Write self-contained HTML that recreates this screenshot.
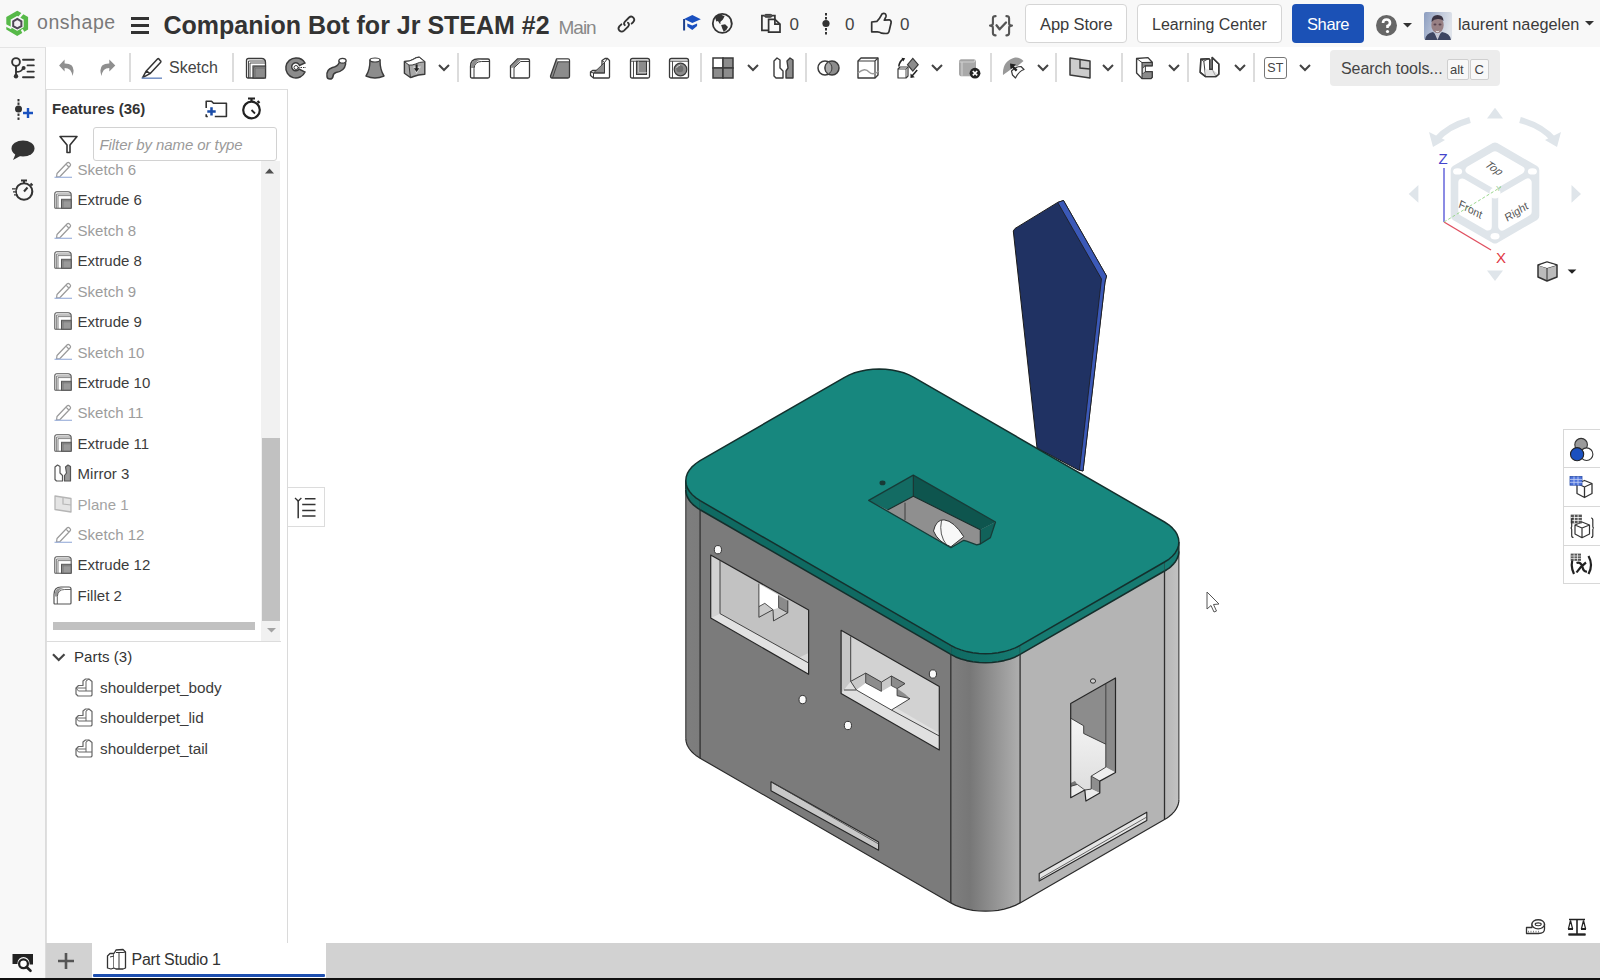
<!DOCTYPE html>
<html><head><meta charset="utf-8"><style>
html,body{margin:0;padding:0;width:1600px;height:980px;overflow:hidden;background:#fff;font-family:"Liberation Sans",sans-serif}
.t{position:absolute;white-space:nowrap}
svg{overflow:visible}
</style></head><body>
<svg style="position:absolute;left:0px;top:0px;" width="1600" height="980" viewBox="0 0 1600 980"><defs>
    <linearGradient id="gF" gradientUnits="userSpaceOnUse" x1="950" y1="0" x2="1021" y2="0">
      <stop offset="0" stop-color="#7f7f7f"/><stop offset="0.28" stop-color="#777777"/><stop offset="1" stop-color="#b0b0b0"/></linearGradient>
    <linearGradient id="gL" gradientUnits="userSpaceOnUse" x1="685" y1="0" x2="701" y2="0">
      <stop offset="0" stop-color="#7e7e7e"/><stop offset="1" stop-color="#7c7c7c"/></linearGradient>
    <linearGradient id="gR" gradientUnits="userSpaceOnUse" x1="1164" y1="0" x2="1179" y2="0">
      <stop offset="0" stop-color="#b6b6b6"/><stop offset="1" stop-color="#c2c2c2"/></linearGradient>
    <linearGradient id="gLF" gradientUnits="userSpaceOnUse" x1="950" y1="0" x2="1021" y2="0">
      <stop offset="0" stop-color="#0f6a62"/><stop offset="1" stop-color="#167a71"/></linearGradient>
    <linearGradient id="gW3" gradientUnits="userSpaceOnUse" x1="0" y1="720" x2="0" y2="790">
      <stop offset="0" stop-color="#f4f4f4"/><stop offset="1" stop-color="#dedede"/></linearGradient>
    </defs>
<polygon points="1013.3,231.0 1015.0,228.5 1057.7,202.4 1063.5,200.5 1106.5,276.0 1105.0,282.0 1083.0,471.0 1078.4,470.0 1037.0,448.0" fill="#203263" stroke="#1a1a1a" stroke-width="1.0" stroke-linejoin="round" />
<polygon points="1057.7,202.4 1063.5,200.5 1106.5,276.0 1105.0,282.0 1083.0,471.0 1079.5,470.0 1101.5,279.0" fill="#3b59b8" stroke="#1a1a1a" stroke-width="0.8" stroke-linejoin="round" />
<polygon points="685.8,489.7 685.9,491.5 686.2,493.4 686.7,495.2 687.4,497.0 688.4,498.8 689.5,500.5 690.8,502.2 692.3,503.8 694.0,505.4 695.9,506.9 697.9,508.3 700.1,509.7 700.1,758.2 697.9,756.8 695.9,755.4 694.0,753.9 692.3,752.3 690.8,750.7 689.5,749.0 688.4,747.3 687.4,745.5 686.7,743.7 686.2,741.9 685.9,740.0 685.8,738.2" fill="url(#gL)" stroke="none" stroke-width="0" stroke-linejoin="round" />
<polygon points="700.1,509.7 950.8,654.4 950.8,902.9 700.1,758.2" fill="#7b7b7b" stroke="none" stroke-width="0" stroke-linejoin="round" />
<polygon points="950.8,654.4 955.6,656.9 961.0,658.9 966.7,660.6 972.8,661.8 979.1,662.5 985.5,662.7 991.9,662.5 998.1,661.8 1004.2,660.6 1010.0,658.9 1015.3,656.9 1020.1,654.4 1020.1,902.9 1015.3,905.4 1010.0,907.4 1004.2,909.1 998.1,910.3 991.9,911.0 985.5,911.2 979.1,911.0 972.8,910.3 966.7,909.1 961.0,907.4 955.6,905.4 950.8,902.9" fill="url(#gF)" stroke="none" stroke-width="0" stroke-linejoin="round" />
<polygon points="1020.1,654.4 1164.5,571.0 1164.5,819.5 1020.1,902.9" fill="#b4b4b4" stroke="none" stroke-width="0" stroke-linejoin="round" />
<polygon points="1164.5,571.0 1166.7,569.7 1168.8,568.3 1170.6,566.8 1172.3,565.2 1173.8,563.6 1175.2,561.9 1176.3,560.1 1177.2,558.4 1178.0,556.6 1178.5,554.7 1178.8,552.9 1178.9,551.1 1178.9,799.6 1178.8,801.4 1178.5,803.2 1178.0,805.1 1177.2,806.9 1176.3,808.6 1175.2,810.4 1173.8,812.1 1172.3,813.7 1170.6,815.3 1168.8,816.8 1166.7,818.2 1164.5,819.5" fill="url(#gR)" stroke="none" stroke-width="0" stroke-linejoin="round" />
<polyline points="685.8,738.2 685.9,740.0 686.2,741.9 686.7,743.7 687.4,745.5 688.4,747.3 689.5,749.0 690.8,750.7 692.3,752.3 694.0,753.9 695.9,755.4 697.9,756.8 700.1,758.2 950.8,902.9 955.6,905.4 961.0,907.4 966.7,909.1 972.8,910.3 979.1,911.0 985.5,911.2 991.9,911.0 998.1,910.3 1004.2,909.1 1010.0,907.4 1015.3,905.4 1020.1,902.9 1164.5,819.5 1166.7,818.2 1168.8,816.8 1170.6,815.3 1172.3,813.7 1173.8,812.1 1175.2,810.4 1176.3,808.6 1177.2,806.9 1178.0,805.1 1178.5,803.2 1178.8,801.4 1178.9,799.6" fill="none" stroke="#2a2a2a" stroke-width="1.2" stroke-linejoin="round"/>
<polyline points="700.1,509.7 700.1,758.2" fill="none" stroke="#2e2e2e" stroke-width="1.3" stroke-linejoin="round"/>
<polyline points="950.8,654.4 950.8,902.9" fill="none" stroke="#2e2e2e" stroke-width="1.3" stroke-linejoin="round"/>
<polyline points="1020.1,654.4 1020.1,902.9" fill="none" stroke="#2e2e2e" stroke-width="1.3" stroke-linejoin="round"/>
<polyline points="1164.5,571.0 1164.5,819.5" fill="none" stroke="#2e2e2e" stroke-width="1.3" stroke-linejoin="round"/>

<polyline points="685.8,489.7 685.8,738.2" fill="none" stroke="#2a2a2a" stroke-width="1.0" stroke-linejoin="round"/>
<polyline points="1178.9,551.1 1178.9,799.6" fill="none" stroke="#2a2a2a" stroke-width="1.0" stroke-linejoin="round"/>
<polygon points="710.7,555.0 808.6,610.0 808.6,674.3 710.7,618.0" fill="#c2c2c2" stroke="none" stroke-width="0" stroke-linejoin="round" />
<polygon points="710.7,555.0 720.0,560.3 720.0,613.6 710.7,618.0" fill="#d2d2d2" stroke="none" stroke-width="0" stroke-linejoin="round" />
<polygon points="710.7,618.0 720.0,613.6 808.6,663.0 808.6,674.3" fill="#e2e2e2" stroke="none" stroke-width="0" stroke-linejoin="round" />
<polygon points="758.9,583.7 778.6,595.0 778.6,609.2 773.0,609.7 764.8,604.1 758.9,606.6" fill="#ffffff" stroke="none" stroke-width="0" stroke-linejoin="round" />
<polygon points="778.6,595.4 787.8,600.5 787.8,612.8 778.6,607.7" fill="#8a8a8a" stroke="none" stroke-width="0" stroke-linejoin="round" />
<polygon points="758.9,606.6 764.8,603.3 773.0,609.7 758.9,617.3" fill="#cacaca" stroke="none" stroke-width="0" stroke-linejoin="round" />
<polygon points="773.0,609.7 778.6,607.7 787.8,612.8 773.5,620.9" fill="#cacaca" stroke="none" stroke-width="0" stroke-linejoin="round" />
<polygon points="794.0,660.0 808.6,653.0 808.6,663.0 799.0,657.0" fill="#d8d8d8" stroke="none" stroke-width="0" stroke-linejoin="round" />
<polygon points="710.7,555.0 808.6,610.0 808.6,674.3 710.7,618.0" fill="none" stroke="#262626" stroke-width="1.2" stroke-linejoin="round" />
<polyline points="720.0,560.3 720.0,613.6 808.6,663.0" fill="none" stroke="#333" stroke-width="0.9" stroke-linejoin="round"/>
<polyline points="758.9,583.7 758.9,617.3 773.0,609.7 773.5,620.9 787.8,612.8 787.8,600.5" fill="none" stroke="#333" stroke-width="0.9" stroke-linejoin="round"/>
<polyline points="758.9,606.6 764.8,603.3 773.0,609.7" fill="none" stroke="#333" stroke-width="0.8" stroke-linejoin="round"/>
<polyline points="778.6,595.4 778.6,607.7 787.8,612.8" fill="none" stroke="#333" stroke-width="0.8" stroke-linejoin="round"/>
<polygon points="841.1,630.3 939.3,686.4 939.3,750.0 841.1,693.6" fill="#d2d2d2" stroke="none" stroke-width="0" stroke-linejoin="round" />
<polygon points="841.1,630.3 850.7,636.4 850.7,681.4 841.1,693.6" fill="#c6c6c6" stroke="none" stroke-width="0" stroke-linejoin="round" />
<polygon points="841.1,693.6 850.7,681.4 939.3,733.0 939.3,750.0" fill="#e0e0e0" stroke="none" stroke-width="0" stroke-linejoin="round" />
<polygon points="850.7,681.4 865.7,673.1 865.7,682.9 856.4,690.0" fill="#c9c9c9" stroke="none" stroke-width="0" stroke-linejoin="round" />
<polygon points="865.7,673.1 881.4,682.1 881.4,691.4 865.7,682.9" fill="#8c8c8c" stroke="none" stroke-width="0" stroke-linejoin="round" />
<polygon points="881.4,682.1 891.4,676.0 891.4,685.7 881.4,691.4" fill="#c9c9c9" stroke="none" stroke-width="0" stroke-linejoin="round" />
<polygon points="891.4,676.0 905.0,683.6 897.1,688.6 891.4,685.7" fill="#8c8c8c" stroke="none" stroke-width="0" stroke-linejoin="round" />
<polygon points="897.1,688.6 897.1,695.7 910.0,698.6 905.0,694.0" fill="#8c8c8c" stroke="none" stroke-width="0" stroke-linejoin="round" />
<polygon points="856.4,690.0 865.7,682.9 881.4,691.4 891.4,685.7 897.1,688.6 897.1,695.7 910.0,698.6 891.4,710.0 868.0,697.0" fill="#ffffff" stroke="none" stroke-width="0" stroke-linejoin="round" />
<polygon points="841.1,630.3 939.3,686.4 939.3,750.0 841.1,693.6" fill="none" stroke="#262626" stroke-width="1.2" stroke-linejoin="round" />
<polyline points="850.7,636.4 850.7,681.4" fill="none" stroke="#333" stroke-width="0.9" stroke-linejoin="round"/>
<polyline points="844.0,690.0 856.4,690.0 891.4,710.0 939.3,736.0" fill="none" stroke="#333" stroke-width="0.9" stroke-linejoin="round"/>
<polyline points="856.4,690.0 850.7,681.4 865.7,673.1 881.4,682.1 891.4,676.0 905.0,683.6 897.1,688.6 897.1,695.7 910.0,698.6 891.4,710.0" fill="none" stroke="#333" stroke-width="0.9" stroke-linejoin="round"/>
<polyline points="865.7,673.1 865.7,682.9 881.4,691.4 881.4,682.1" fill="none" stroke="#333" stroke-width="0.8" stroke-linejoin="round"/>
<polyline points="891.4,676.0 891.4,685.7 897.1,688.6" fill="none" stroke="#333" stroke-width="0.8" stroke-linejoin="round"/>
<ellipse cx="717.9" cy="549.7" rx="3.6" ry="4.14" fill="#fafafa" stroke="#333" stroke-width="1"/>
<ellipse cx="802.6" cy="699.6" rx="3.6" ry="4.14" fill="#fafafa" stroke="#333" stroke-width="1"/>
<ellipse cx="847.9" cy="725.5" rx="3.6" ry="4.14" fill="#fafafa" stroke="#333" stroke-width="1"/>
<ellipse cx="932.9" cy="674" rx="3.6" ry="4.14" fill="#fafafa" stroke="#333" stroke-width="1"/>
<polygon points="771.0,781.7 878.6,842.0 878.6,850.3 771.0,790.7" fill="#c8c8c8" stroke="#262626" stroke-width="1.1" stroke-linejoin="round" />
<polyline points="771.0,781.7 775.0,784.0 878.6,844.0" fill="none" stroke="#444" stroke-width="0.8" stroke-linejoin="round"/>
<polygon points="1070.7,703.6 1115.5,678.0 1115.5,772.5 1099.8,781.1 1099.8,793.0 1085.9,801.0 1084.8,790.0 1070.7,797.7" fill="url(#gW3)" stroke="none" stroke-width="0" stroke-linejoin="round" />
<polygon points="1070.7,703.6 1105.8,683.7 1105.8,744.2 1083.7,733.5 1083.7,725.8 1070.7,718.2" fill="#8c8c8c" stroke="none" stroke-width="0" stroke-linejoin="round" />
<polygon points="1115.5,678.0 1105.8,683.7 1105.8,767.2 1115.5,772.5" fill="#8a8a8a" stroke="none" stroke-width="0" stroke-linejoin="round" />
<polygon points="1105.8,767.2 1091.2,776.1 1099.8,781.1 1115.5,772.5" fill="#eeeeee" stroke="none" stroke-width="0" stroke-linejoin="round" />
<polygon points="1091.2,776.1 1099.8,781.1 1099.8,793.0 1091.2,789.1" fill="#8e8e8e" stroke="none" stroke-width="0" stroke-linejoin="round" />
<polygon points="1084.8,790.0 1091.2,789.1 1099.8,793.0 1085.9,801.0" fill="#ececec" stroke="none" stroke-width="0" stroke-linejoin="round" />
<polygon points="1070.7,786.4 1077.3,784.4 1083.9,788.4 1084.8,790.0 1070.7,797.7" fill="#ececec" stroke="none" stroke-width="0" stroke-linejoin="round" />
<polygon points="1070.7,783.0 1075.0,781.0 1077.3,784.4 1070.7,786.4" fill="#777" stroke="none" stroke-width="0" stroke-linejoin="round" />
<polygon points="1070.7,703.6 1115.5,678.0 1115.5,772.5 1099.8,781.1 1099.8,793.0 1085.9,801.0 1084.8,790.0 1070.7,797.7" fill="none" stroke="#262626" stroke-width="1.2" stroke-linejoin="round" />
<polyline points="1070.7,718.2 1083.7,725.8 1083.7,733.5 1105.8,744.2" fill="none" stroke="#333" stroke-width="0.9" stroke-linejoin="round"/>
<polyline points="1105.8,683.7 1105.8,767.2 1091.2,776.1 1091.2,789.1 1084.8,790.0" fill="none" stroke="#333" stroke-width="0.9" stroke-linejoin="round"/>
<polyline points="1091.2,776.1 1099.8,781.1" fill="none" stroke="#333" stroke-width="0.8" stroke-linejoin="round"/>
<polyline points="1070.7,786.4 1077.3,784.4 1084.8,790.0" fill="none" stroke="#333" stroke-width="0.8" stroke-linejoin="round"/>
<ellipse cx="1093" cy="681" rx="2.6" ry="2.2" fill="#d0d0d0" stroke="#333" stroke-width="1"/>
<polygon points="1039.2,873.4 1146.8,812.2 1146.8,820.5 1039.2,881.0" fill="#e6e6e6" stroke="#262626" stroke-width="1.1" stroke-linejoin="round" />
<polyline points="1039.2,881.0 1041.0,878.0 1146.8,817.0" fill="none" stroke="#444" stroke-width="0.8" stroke-linejoin="round"/>
<polygon points="685.8,480.7 685.9,482.5 686.2,484.4 686.7,486.2 687.4,488.0 688.4,489.8 689.5,491.5 690.8,493.2 692.3,494.8 694.0,496.4 695.9,497.9 697.9,499.3 700.1,500.7 700.1,509.7 697.9,508.3 695.9,506.9 694.0,505.4 692.3,503.8 690.8,502.2 689.5,500.5 688.4,498.8 687.4,497.0 686.7,495.2 686.2,493.4 685.9,491.5 685.8,489.7" fill="#137067" stroke="none" stroke-width="0" stroke-linejoin="round" />
<polygon points="700.1,500.7 950.8,645.4 950.8,654.4 700.1,509.7" fill="#0f6a62" stroke="none" stroke-width="0" stroke-linejoin="round" />
<polygon points="950.8,645.4 955.6,647.9 961.0,649.9 966.7,651.6 972.8,652.8 979.1,653.5 985.5,653.7 991.9,653.5 998.1,652.8 1004.2,651.6 1010.0,649.9 1015.3,647.9 1020.1,645.4 1020.1,654.4 1015.3,656.9 1010.0,658.9 1004.2,660.6 998.1,661.8 991.9,662.5 985.5,662.7 979.1,662.5 972.8,661.8 966.7,660.6 961.0,658.9 955.6,656.9 950.8,654.4" fill="url(#gLF)" stroke="none" stroke-width="0" stroke-linejoin="round" />
<polygon points="1020.1,645.4 1164.5,562.0 1164.5,571.0 1020.1,654.4" fill="#167a71" stroke="none" stroke-width="0" stroke-linejoin="round" />
<polygon points="1164.5,562.0 1166.7,560.7 1168.8,559.3 1170.6,557.8 1172.3,556.2 1173.8,554.6 1175.2,552.9 1176.3,551.1 1177.2,549.4 1178.0,547.6 1178.5,545.7 1178.8,543.9 1178.9,542.1 1178.9,551.1 1178.8,552.9 1178.5,554.7 1178.0,556.6 1177.2,558.4 1176.3,560.1 1175.2,561.9 1173.8,563.6 1172.3,565.2 1170.6,566.8 1168.8,568.3 1166.7,569.7 1164.5,571.0" fill="#177d74" stroke="none" stroke-width="0" stroke-linejoin="round" />
<polyline points="685.8,489.7 685.9,491.5 686.2,493.4 686.7,495.2 687.4,497.0 688.4,498.8 689.5,500.5 690.8,502.2 692.3,503.8 694.0,505.4 695.9,506.9 697.9,508.3 700.1,509.7 950.8,654.4 955.6,656.9 961.0,658.9 966.7,660.6 972.8,661.8 979.1,662.5 985.5,662.7 991.9,662.5 998.1,661.8 1004.2,660.6 1010.0,658.9 1015.3,656.9 1020.1,654.4 1164.5,571.0 1166.7,569.7 1168.8,568.3 1170.6,566.8 1172.3,565.2 1173.8,563.6 1175.2,561.9 1176.3,560.1 1177.2,558.4 1178.0,556.6 1178.5,554.7 1178.8,552.9 1178.9,551.1" fill="none" stroke="#142e2b" stroke-width="1.6" stroke-linejoin="round"/>
<polyline points="700.1,500.7 700.1,509.7" fill="none" stroke="#184a45" stroke-width="0.8" stroke-linejoin="round"/>
<polyline points="950.8,645.4 950.8,654.4" fill="none" stroke="#184a45" stroke-width="0.8" stroke-linejoin="round"/>
<polyline points="1020.1,645.4 1020.1,654.4" fill="none" stroke="#184a45" stroke-width="0.8" stroke-linejoin="round"/>
<polyline points="1164.5,562.0 1164.5,571.0" fill="none" stroke="#184a45" stroke-width="0.8" stroke-linejoin="round"/>
<polyline points="685.8,480.7 685.8,489.7" fill="none" stroke="#142e2b" stroke-width="1.4" stroke-linejoin="round"/>
<polyline points="1178.9,542.1 1178.9,551.1" fill="none" stroke="#142e2b" stroke-width="1.4" stroke-linejoin="round"/>
<polygon points="844.6,377.3 849.4,374.9 854.7,372.8 860.5,371.2 866.5,370.0 872.8,369.3 879.2,369.0 885.6,369.3 891.9,370.0 897.9,371.2 903.7,372.8 909.0,374.9 913.8,377.3 1164.5,522.0 1168.8,524.8 1172.3,527.9 1175.2,531.2 1177.2,534.7 1178.5,538.4 1178.9,542.1 1178.5,545.7 1177.2,549.4 1175.2,552.9 1172.3,556.2 1168.8,559.3 1164.5,562.0 1020.1,645.4 1015.3,647.9 1010.0,649.9 1004.2,651.6 998.1,652.8 991.9,653.5 985.5,653.7 979.1,653.5 972.8,652.8 966.7,651.6 961.0,649.9 955.6,647.9 950.8,645.4 700.1,500.7 695.9,497.9 692.3,494.8 689.5,491.5 687.4,488.0 686.2,484.4 685.8,480.7 686.2,477.0 687.4,473.4 689.5,469.9 692.3,466.6 695.9,463.5 700.1,460.7" fill="#17877e" stroke="#13302d" stroke-width="1.5" stroke-linejoin="round" />
<polygon points="868.7,500.4 913.3,475.1 995.5,522.0 990.4,537.6 980.3,544.0 976.7,544.9 966.6,541.2 963.8,540.3 950.9,547.7" fill="#8f8f8f" stroke="none" stroke-width="0" stroke-linejoin="round" />
<polygon points="868.7,500.4 913.3,475.1 913.3,496.2 887.6,510.0" fill="#136b63" stroke="none" stroke-width="0" stroke-linejoin="round" />
<polygon points="913.3,475.1 995.5,522.0 980.3,529.8 913.3,496.2" fill="#0e554e" stroke="none" stroke-width="0" stroke-linejoin="round" />
<polygon points="980.3,529.8 995.5,522.0 990.4,537.6 980.3,544.0" fill="#11625a" stroke="none" stroke-width="0" stroke-linejoin="round" />
<polyline points="905.0,502.7 905.0,520.1" fill="none" stroke="#333" stroke-width="0.9" stroke-linejoin="round"/>
<path d="M933.5 531 Q936 519.5 944 519.8 Q954 521 963.8 536.7 L950.9 546.8 Q938 542 933.5 531Z" fill="#f8f8f8" stroke="#333" stroke-width="1"/>
<path d="M941.5 520.3 Q938.5 535 947 545.5" fill="none" stroke="#444" stroke-width="0.9"/>
<polygon points="868.7,500.4 913.3,475.1 995.5,522.0 990.4,537.6 980.3,544.0 976.7,544.9 966.6,541.2 963.8,540.3 950.9,547.7" fill="none" stroke="#163c38" stroke-width="1.3" stroke-linejoin="round" />
<polyline points="887.6,510.0 913.3,496.2 980.3,529.8 980.3,544.0" fill="none" stroke="#1a2e2c" stroke-width="1.1" stroke-linejoin="round"/>
<polyline points="913.3,475.1 913.3,496.2" fill="none" stroke="#1a2e2c" stroke-width="1.0" stroke-linejoin="round"/>
<ellipse cx="882.5" cy="482.9" rx="3" ry="2.3" fill="#183a36"/></svg>
<svg style="position:absolute;left:0px;top:0px;" width="1600" height="980" viewBox="0 0 1600 980">
    <g fill="#dfe5ea">
      <path d="M1487 118.4 L1495 107.8 L1503 118.4Z"/>
      <path d="M1487 270.5 L1503 270.5 L1495 281Z"/>
      <path d="M1418.4 185 L1418.4 202.7 L1408.7 194Z"/>
      <path d="M1571.5 185 L1581 194 L1571.5 202.7Z"/>
    </g>
    <g fill="none" stroke="#dfe5ea" stroke-width="6">
      <path d="M1470 120 Q1448 126 1436 140"/>
      <path d="M1520 120 Q1542 126 1554 140"/>
    </g>
    <path d="M1429 132 L1433 147 L1445 140Z" fill="#dfe5ea"/>
    <path d="M1561 132 L1557 147 L1545 140Z" fill="#dfe5ea"/>
    <polygon points="1495.0,147.0 1534.8,170.0 1534.8,216.0 1495.0,239.0 1455.2,216.0 1455.2,170.0" fill="#dfe5ea" stroke="#dfe5ea" stroke-width="9" stroke-linejoin="round"/>
    <polygon points="1495.0,155.3 1520.5,170.0 1495.0,184.7 1469.5,170.0" fill="#fff" stroke="#fff" stroke-width="8" stroke-linejoin="round"/>
    <polygon points="1462.3,182.4 1487.8,197.1 1487.8,226.6 1462.3,211.9" fill="#fff" stroke="#fff" stroke-width="8" stroke-linejoin="round"/>
    <polygon points="1502.2,197.1 1527.7,182.4 1527.7,211.9 1502.2,226.6" fill="#fff" stroke="#fff" stroke-width="8" stroke-linejoin="round"/>
    <ellipse cx="1457.6" cy="171.4" rx="4.5" ry="3.2" fill="#fff"/>
    <ellipse cx="1532.4" cy="171.4" rx="4.5" ry="3.2" fill="#fff"/>
    <ellipse cx="1495.0" cy="236.2" rx="4.5" ry="3.2" fill="#fff"/>
    <circle cx="1495" cy="193" r="5.5" fill="#fff"/>
    <text x="0" y="0" font-family="Liberation Sans" font-size="11" font-style="italic" fill="#555" transform="translate(1484,166) rotate(33) skewX(-12)">Top</text>
    <text x="0" y="0" font-family="Liberation Sans" font-size="11" fill="#555" transform="translate(1458,207) rotate(28) skewX(10)">Front</text>
    <text x="0" y="0" font-family="Liberation Sans" font-size="11" fill="#555" transform="translate(1507,222) rotate(-32) skewX(-8)">Right</text>
    <text x="1496" y="191" font-family="Liberation Sans" font-size="8" fill="#9c9">Y</text>
    <path d="M1444 222 L1444 168" stroke="#5a5ad8" stroke-width="1.4"/>
    <path d="M1444 222 L1491 250" stroke="#e05060" stroke-width="1.4"/>
    <path d="M1444 222 L1501 187" stroke="#9bd88e" stroke-width="1" stroke-dasharray="3 2"/>
    <text x="1438.5" y="163.5" font-family="Liberation Sans" font-size="15" fill="#4444cc">Z</text>
    <text x="1496" y="262.5" font-family="Liberation Sans" font-size="15" fill="#e03844">X</text>
    <g transform="translate(1537,261)">
      <path d="M1 4 L10 1 L20 4 L20 16 L10 20 L1 16Z" fill="#bbb" stroke="#333" stroke-width="1.5" stroke-linejoin="round"/>
      <path d="M1 4 L10 7 L20 4 M10 7 L10 20" fill="none" stroke="#333" stroke-width="1"/>
      <path d="M1.8 4.5 L10 7 L19 4.2 L10 1.6Z" fill="#fff"/>
    </g>
    <path d="M1567.6 269.6 L1576.4 269.6 L1572 273.8Z" fill="#222"/>
    </svg>
<div style="position:absolute;left:1563px;top:429px;width:37px;height:155px;background:#fff;border:1px solid #d8d8d8;border-right:none;box-sizing:border-box"></div>
<div style="position:absolute;left:1564px;top:467px;width:36px;height:1px;background:#d8d8d8"></div>
<div style="position:absolute;left:1564px;top:506px;width:36px;height:1px;background:#d8d8d8"></div>
<div style="position:absolute;left:1564px;top:545px;width:36px;height:1px;background:#d8d8d8"></div>
<svg style="position:absolute;left:1568px;top:436px;" width="28" height="28" viewBox="0 0 28 28"><circle cx="13.1" cy="8.7" r="6.3" fill="#9a9a9a" stroke="#333" stroke-width="1.1"/><circle cx="18.6" cy="18.2" r="6.3" fill="#fff" stroke="#333" stroke-width="1.1"/><circle cx="9.1" cy="18.2" r="6.6" fill="#1a50c0" stroke="#222" stroke-width="1.1"/></svg>
<svg style="position:absolute;left:1568px;top:474px;" width="28" height="28" viewBox="0 0 28 28"><path d="M9 9.5 L16.5 6.5 L24 9.5 L24 19.5 L16.5 23.5 L9 19.5Z M9 9.5 L16.5 13 L24 9.5 M16.5 13 L16.5 23.5" fill="#fff" stroke="#333" stroke-width="1.3" stroke-linejoin="round"/><rect x="2" y="2.5" width="12" height="8.7" fill="#4d72dc" stroke="#2c4fa8" stroke-width="0.8"/><path d="M2 5.4 L14 5.4 M2 8.3 L14 8.3 M6 2.5 L6 11.2 M10 2.5 L10 11.2" stroke="#c9d6f5" stroke-width="0.8"/></svg>
<svg style="position:absolute;left:1568px;top:513px;" width="28" height="28" viewBox="0 0 28 28"><path d="M7 12 L14 9 L21.5 12 L21.5 21 L14 24.7 L7 21Z M7 12 L14 15 L21.5 12 M14 15 L14 24.7" fill="#fff" stroke="#333" stroke-width="1.2" stroke-linejoin="round"/><rect x="2.7" y="1.6" width="11.2" height="8.8" fill="#555"/><path d="M2.7 4.5 L13.9 4.5 M2.7 7.4 L13.9 7.4 M6.4 1.6 L6.4 10.4 M10.1 1.6 L10.1 10.4" stroke="#fff" stroke-width="0.8"/><path d="M5.5 5 Q3.7 5 3.7 7 L3.7 13.5 Q3.7 15 2.5 15 Q3.7 15 3.7 16.5 L3.7 22.5 Q3.7 24.5 5.5 24.5 M23 5 Q24.8 5 24.8 7 L24.8 13.5 Q24.8 15 26 15 Q24.8 15 24.8 16.5 L24.8 22.5 Q24.8 24.5 23 24.5" fill="none" stroke="#333" stroke-width="1.2"/></svg>
<svg style="position:absolute;left:1568px;top:552px;" width="28" height="28" viewBox="0 0 28 28"><path d="M6 4 Q1.5 12.5 6 22" fill="none" stroke="#222" stroke-width="2.2"/><path d="M20.5 4 Q25.5 13 20.5 22" fill="none" stroke="#222" stroke-width="2.2"/><path d="M8.5 11 Q13 9.5 14.5 15 Q15.5 20 19 19.5 M18 10.5 Q12.5 14.5 8.5 20.5" fill="none" stroke="#222" stroke-width="2.2"/><rect x="2.7" y="1.6" width="10.3" height="7.2" fill="#555"/><path d="M2.7 4 L13 4 M2.7 6.4 L13 6.4 M6.1 1.6 L6.1 8.8 M9.5 1.6 L9.5 8.8" stroke="#fff" stroke-width="0.7"/></svg>
<div style="position:absolute;left:287px;top:487px;width:38px;height:40px;background:#fff;border:1px solid #dcdcdc;border-left:none;box-sizing:border-box"></div>
<svg style="position:absolute;left:294px;top:495px;" width="24" height="24" viewBox="0 0 24 24"><path d="M1 3 L4.2 6 L7.4 3" fill="none" stroke="#333" stroke-width="1.3"/><path d="M4.2 5.5 L4.2 23.2" stroke="#333" stroke-width="1.5"/><path d="M10.9 3.8 L21.5 3.8 M8.2 9.5 L21.5 9.5 M8.2 15.4 L21.5 15.4 M8.2 21.1 L21.5 21.1" stroke="#333" stroke-width="1.5"/></svg>
<svg style="position:absolute;left:1525px;top:918px;" width="22" height="17" viewBox="0 0 22 17"><path d="M1.5 9.5 L7 9.5 L7 6 L19.5 6 L19.5 11 Q19.5 15.5 13.5 15.5 L1.5 15.5Z" fill="#fff" stroke="#333" stroke-width="1.3" stroke-linejoin="round"/><ellipse cx="13.2" cy="6.3" rx="6.3" ry="4.6" fill="#fff" stroke="#333" stroke-width="1.4"/><ellipse cx="13.2" cy="6.3" rx="3" ry="1.4" fill="none" stroke="#333" stroke-width="1.1"/><path d="M3.5 12.8 L3.5 14.5 M6 12.8 L6 14.5 M8.5 12.8 L8.5 14.5 M11 12.8 L11 14.5 M13.5 12.8 L13.5 14.5" stroke="#666" stroke-width="0.8"/></svg>
<svg style="position:absolute;left:1567px;top:918px;" width="20" height="18" viewBox="0 0 20 18"><path d="M2 1.5 L18 1.5 M10 1.5 L10 16 M1.5 16.5 L18.5 16.5" stroke="#222" stroke-width="1.6"/><path d="M1.5 16.5 L18.5 16.5" stroke="#222" stroke-width="2.2"/><path d="M3.5 2.5 L1.5 10.5 L5.5 10.5Z M16.5 2.5 L14.5 10.5 L18.5 10.5Z" fill="#fff" stroke="#222" stroke-width="1.2"/><path d="M1 11 L6 11 M14 11 L19 11" stroke="#222" stroke-width="1.8"/></svg>
<svg style="position:absolute;left:1205px;top:590px;" width="18" height="26" viewBox="0 0 18 26"><path d="M2 2 L2 19 L6 15.5 L9 22 L11.5 21 L8.5 14.5 L14 14Z" fill="#fff" stroke="#555" stroke-width="1"/></svg>
<div style="position:absolute;left:0px;top:0px;width:1600px;height:47px;background:#f8f8f8"></div>
<svg style="position:absolute;left:5.5px;top:11px;" width="23" height="25" viewBox="0 0 23 25">
    <path d="M11.2 2.25 L19.9 7.27 L19.9 17.33 L11.2 22.35 L2.5 17.33 L2.5 7.27 Z" fill="none" stroke="#56b948" stroke-width="4.4" stroke-linejoin="miter"/>
    <path d="M12.6 7 L17.8 1" stroke="#f8f8f8" stroke-width="2.2"/>
    <path d="M-0.5 14.2 L5.5 17.2" stroke="#f8f8f8" stroke-width="2.2"/>
    <path d="M15.8 18.4 L18.8 24.6" stroke="#f8f8f8" stroke-width="2.2"/>
    <path d="M11.3 7.97 L15.4 10.33 L15.4 15.07 L11.3 17.43 L7.2 15.07 L7.2 10.33 Z" fill="#f4eef4" stroke="#4f4656" stroke-width="2"/>
    </svg>
<div class="t" style="left:37.0px;top:12.69px;font-size:19.5px;line-height:19.5px;font-weight:400;color:#7a7a7a;letter-spacing:0.55px;">onshape</div>
<div style="position:absolute;left:131px;top:17px;width:18px;height:3px;background:#333"></div>
<div style="position:absolute;left:131px;top:24px;width:18px;height:3px;background:#333"></div>
<div style="position:absolute;left:131px;top:31px;width:18px;height:3px;background:#333"></div>
<div class="t" style="left:163.5px;top:12.59px;font-size:25px;line-height:25px;font-weight:700;color:#333;">Companion Bot for Jr STEAM #2</div>
<div class="t" style="left:558.5px;top:17.67px;font-size:19px;line-height:19px;font-weight:400;color:#888;letter-spacing:-1px;">Main</div>
<svg style="position:absolute;left:618px;top:16px;" width="17" height="17" viewBox="0 0 17 17"><g fill="none" stroke="#333" stroke-width="1.8" stroke-linecap="round">
      <path d="M6.8 9.2 Q5.2 7.5 7 5.5 L11 1.5 Q13.5 -0.5 15.5 1.8 Q17.2 4 15.3 6 L13.6 7.6"/>
      <path d="M3.4 8.3 L1.3 10.4 Q-0.5 12.8 1.6 14.8 Q3.8 16.6 6 14.6 L10.3 10.3 Q11.8 8.2 9.9 6.6"/>
    </g></svg>
<svg style="position:absolute;left:683px;top:15px;" width="18" height="17" viewBox="0 0 18 17"><g fill="#1a50c0">
      <path d="M1.1 4 L9.3 0 L17.8 4.3 L9.3 7.9 Z"/>
      <path d="M4.3 8.5 L9.3 10.6 L14.1 8.5 L14.1 10.9 L9.3 14.9 L4.3 11.4 Z"/>
    </g>
    <path d="M1.1 4 L1.1 15.5" stroke="#1c3f8a" stroke-width="2"/></svg>
<svg style="position:absolute;left:711px;top:13px;" width="22" height="22" viewBox="0 0 22 22"><circle cx="11.3" cy="10.4" r="9.5" fill="none" stroke="#333" stroke-width="1.8"/>
    <path d="M4.7 2.7 L9 1.3 L13.6 3.3 L11.9 6.4 L9.3 9 L9.6 11 L8.5 10.5 L7 7.9 L5.3 8.4 L4.4 5.6Z" fill="#333"/>
    <path d="M10.1 12.1 L14.1 11.3 L17 14.1 L15.3 17 L12.7 18.7 L11.3 15.6Z" fill="#333"/>
    <path d="M19.3 7 L21 7.9 L21.2 11.9 L19.9 10.7Z" fill="#333"/></svg>
<svg style="position:absolute;left:761px;top:14px;" width="21" height="19" viewBox="0 0 21 19"><g fill="none" stroke="#333" stroke-width="1.7" stroke-linejoin="miter">
      <path d="M3.2 1.7 L0.9 1.7 L0.9 16.4 L7.6 16.4"/>
      <path d="M11 1.7 L13.9 1.7 L13.9 5.4"/>
      <path d="M7.6 5.4 L13.9 5.4 L19 10.2 L19 18.2 L7.6 18.2 Z"/>
      <path d="M13.9 5.4 L13.9 10.2 L19 10.2"/>
    </g>
    <rect x="3.6" y="0.4" width="7.2" height="2.8" rx="1" fill="#555" stroke="#333" stroke-width="1"/></svg>
<div class="t" style="left:789.5px;top:15.81px;font-size:17px;line-height:17px;font-weight:400;color:#444;">0</div>
<svg style="position:absolute;left:822px;top:13px;" width="8" height="22" viewBox="0 0 8 22"><g fill="#333"><rect x="3" y="0" width="2" height="2.5"/><rect x="3" y="4" width="2" height="2.5"/>
      <circle cx="4" cy="10.5" r="3.6"/><rect x="3" y="15" width="2" height="2.5"/><rect x="3" y="19" width="2" height="2.5"/></g></svg>
<div class="t" style="left:845.0px;top:15.81px;font-size:17px;line-height:17px;font-weight:400;color:#444;">0</div>
<svg style="position:absolute;left:870px;top:13px;" width="22" height="21" viewBox="0 0 22 21"><path d="M1.7 9 L6.9 8.4 Q9.5 6 11.1 2.7 L12 0.9 Q13.8 -0.2 15.4 0.9 Q16.4 2.5 16 3.6 L14.3 7.2 L19.2 6.8 Q21.5 7.5 21.1 9.8 L19 18.6 Q18.5 20.5 16 20.5 Q13 20.5 11.7 20.2 Q9.5 18.8 7.4 18.8 L1.7 18.8 Z"
       fill="none" stroke="#333" stroke-width="1.7" stroke-linejoin="round"/></svg>
<div class="t" style="left:900.0px;top:15.81px;font-size:17px;line-height:17px;font-weight:400;color:#444;">0</div>
<svg style="position:absolute;left:984px;top:10px;" width="34" height="30" viewBox="0 0 34 30"><g fill="none" stroke="#555" stroke-width="2.1" stroke-linecap="round" stroke-linejoin="round"><path d="M11.6 6.1 Q8.9 6 8.9 8.5 L8.9 13.5 Q8.9 15.6 6 15.6 Q8.9 15.6 8.9 17.8 L8.9 23 Q8.9 25.4 11.6 25.4"/><path d="M22.4 6.1 Q25.1 6 25.1 8.5 L25.1 13.5 Q25.1 15.6 28 15.6 Q25.1 15.6 25.1 17.8 L25.1 23 Q25.1 25.4 22.4 25.4"/><path d="M12.5 15.3 L15.6 19.3 L22 12.5" stroke-width="2.3"/></g></svg>
<div style="position:absolute;left:1025px;top:4px;width:100px;height:38px;background:#fff;border:1px solid #d5d5d5;border-radius:4px;box-sizing:border-box;width:102px;height:39px"></div>
<div class="t" style="left:1040.0px;top:16.23px;font-size:16.5px;line-height:16.5px;font-weight:400;color:#3a3a3a;letter-spacing:-0.1px;">App Store</div>
<div style="position:absolute;left:1137px;top:4px;width:145px;height:39px;background:#fff;border:1px solid #d5d5d5;border-radius:4px;box-sizing:border-box"></div>
<div class="t" style="left:1152.0px;top:16.66px;font-size:16px;line-height:16px;font-weight:400;color:#3a3a3a;">Learning Center</div>
<div style="position:absolute;left:1292px;top:4px;width:72px;height:39px;background:#1b51b6;border-radius:4px"></div>
<div class="t" style="left:1307.0px;top:16.23px;font-size:16.5px;line-height:16.5px;font-weight:400;color:#fff;letter-spacing:-0.4px;">Share</div>
<svg style="position:absolute;left:1376px;top:15px;" width="21" height="21" viewBox="0 0 21 21"><circle cx="10.5" cy="10.5" r="10.5" fill="#666"/><path d="M7 8 Q7 4.5 10.5 4.5 Q14 4.5 14 7.8 Q14 10 11.5 11 L11.5 13" fill="none" stroke="#fff" stroke-width="2.6"/><circle cx="11.5" cy="16.5" r="1.6" fill="#fff"/></svg>
<svg style="position:absolute;left:1403px;top:23px;" width="10" height="5" viewBox="0 0 10 5"><path d="M0 0 L9 0 L4.5 4.5Z" fill="#333"/></svg>
<svg style="position:absolute;left:1424px;top:12px;" width="28" height="28" viewBox="0 0 28 28"><defs><linearGradient id="avbg" x1="0" y1="0" x2="1" y2="0.3"><stop offset="0" stop-color="#8b9dc0"/><stop offset="0.6" stop-color="#c2cadb"/><stop offset="1" stop-color="#dfe3ea"/></linearGradient></defs>
    <rect width="28" height="28" rx="2" fill="url(#avbg)"/>
    <ellipse cx="13.5" cy="13" rx="6.2" ry="8.3" fill="#988084"/>
    <path d="M7.5 10 Q7.5 3 13.5 3 Q19.5 3 19.5 9 Q17 6.5 13.5 7 Q10 7 7.5 10Z" fill="#3a3342"/>
    <ellipse cx="11" cy="12.5" rx="1.5" ry="0.9" fill="#5a4450"/><ellipse cx="16" cy="12.5" rx="1.5" ry="0.9" fill="#5a4450"/>
    <path d="M11.5 18.5 Q13.5 20 15.5 18.5 L14.8 19.8 Q13.5 20.6 12.2 19.8Z" fill="#eee"/>
    <path d="M1 28 Q2 21 9 20 L13.5 24 L18 20 Q26 21 27 28Z" fill="#3e4662"/>
    <path d="M10.5 21 L13.5 28 L16.5 21 L13.5 23.5Z" fill="#c8c8d4"/></svg>
<div class="t" style="left:1458.0px;top:16.40px;font-size:16.3px;line-height:16.3px;font-weight:400;color:#3a3a3a;">laurent naegelen</div>
<svg style="position:absolute;left:1585px;top:21px;" width="10" height="5" viewBox="0 0 10 5"><path d="M0 0 L9 0 L4.5 4.5Z" fill="#333"/></svg>
<div style="position:absolute;left:0px;top:47px;width:46px;height:931px;background:#f8f8f8;border-right:1px solid #dcdcdc;box-sizing:border-box;border-top:1px solid #e4e4e4"></div>
<div style="position:absolute;left:46px;top:46.5px;width:1554px;height:42.5px;background:#fff"></div>
<svg style="position:absolute;left:59px;top:59px;" width="17" height="18" viewBox="0 0 17 18"><path d="M0.1 6.5 L5.6 0.5 L5.6 4.4 Q14.6 4.2 14.6 11.5 Q14.6 14.5 13.3 17.1 Q12.8 9.2 5.6 9 L5.6 12.4 Z" fill="#8f8f8f"/></svg>
<svg style="position:absolute;left:99px;top:59px;" width="17" height="18" viewBox="0 0 17 18"><path d="M16.3 6.5 L10.3 0.5 L10.3 4.4 Q1.4 4.2 1.4 11.5 Q1.4 14.5 2.7 17.1 Q3.2 9.2 10.3 9 L10.3 12.4 Z" fill="#8f8f8f"/></svg>
<div style="position:absolute;left:129px;top:53px;width:2px;height:29px;background:#dcdcdc"></div>
<svg style="position:absolute;left:142px;top:58px;" width="21" height="22" viewBox="0 0 21 22"><path d="M0.6 19.6 L4.3 12.9 L15.7 0.8 Q16.3 0.3 16.9 0.9 L18.6 2.9 Q19.2 3.5 18.7 4.2 L8 15.7 Z M4.3 12.9 L8 15.7" fill="none" stroke="#333" stroke-width="1.5" stroke-linejoin="round"/><path d="M-0.4 20.2 L20 20.2" stroke="#7390c4" stroke-width="1.5"/></svg>
<div class="t" style="left:169.0px;top:60.46px;font-size:16px;line-height:16px;font-weight:400;color:#444;">Sketch</div>
<div style="position:absolute;left:232px;top:53px;width:2px;height:29px;background:#dcdcdc"></div>
<svg style="position:absolute;left:245px;top:57px;" width="22" height="22" viewBox="0 0 22 22"><path d="M1.5 19.5 L1.5 3.5 Q1.5 1.5 3.5 1.5 L16.5 1.5 Q20.5 1.5 20.5 5.5 L20.5 19.5 Q20.5 21 19 21 L3 21 Q1.5 21 1.5 19.5Z" fill="#fff" stroke="#3a3a3a" stroke-width="1.3"/><path d="M3.5 21 L3.5 4 L20.5 4 M5 21 L5 6 L20.5 6" fill="none" stroke="#3a3a3a" stroke-width="0.9"/><rect x="8" y="9" width="12.5" height="12" fill="#8c8c8c" stroke="#3a3a3a" stroke-width="1.2"/><path d="M8 9 L10 11 L20.5 11 M10 11 L10 21" fill="none" stroke="#666" stroke-width="0.8"/></svg>
<svg style="position:absolute;left:285px;top:57px;" width="22" height="22" viewBox="0 0 22 22"><path d="M11 1 A10 10 0 1 0 20 15 L14 12 A4 4 0 1 1 14.5 8.5 L20 6 A10 10 0 0 0 11 1Z" fill="#8c8c8c" stroke="#3a3a3a" stroke-width="1.5"/><circle cx="11" cy="10.5" r="2" fill="#ffffff" stroke="#3a3a3a" stroke-width="1"/><path d="M13 10.5 L21 10.5" stroke="#3a3a3a" stroke-width="1" stroke-dasharray="1.5 1"/></svg>
<svg style="position:absolute;left:325px;top:57px;" width="22" height="22" viewBox="0 0 22 22"><path d="M2 19.5 Q1 12.5 7.5 10.5 Q12.5 9.5 14 6 L14.5 3.5 L20.5 4 L20.5 7.5 Q19.5 14 11 15.5 Q8 16.5 8 19.5 Q7.5 22 5 22 Q2.2 22 2 19.5Z" fill="#8c8c8c" stroke="#3a3a3a" stroke-width="1.5" stroke-linejoin="round"/><ellipse cx="17.5" cy="3.8" rx="3.6" ry="2.4" fill="#fff" stroke="#3a3a3a" stroke-width="1.3"/></svg>
<svg style="position:absolute;left:365px;top:57px;" width="22" height="22" viewBox="0 0 22 22"><path d="M5 3 L15 3 Q15 13 19 19 Q10 23 1 19 Q5 13 5 3Z" fill="#8c8c8c" stroke="#3a3a3a" stroke-width="1.4" stroke-linejoin="round"/><ellipse cx="10" cy="3" rx="5" ry="2" fill="#ffffff" stroke="#3a3a3a" stroke-width="1.2"/></svg>
<svg style="position:absolute;left:404px;top:57px;" width="22" height="22" viewBox="0 0 22 22"><path d="M0.4 4.5 Q6 4.5 9 2.5 Q12.5 0.2 15.2 0.2 L20.8 4.8 L20.8 17.2 Q14 17.5 9.5 19.5 Q7.5 20.5 6.4 20.5 L0.4 16.2 Z" fill="#a8a8a8" stroke="#3a3a3a" stroke-width="1.4" stroke-linejoin="round"/><path d="M0.4 4.5 Q6 4.5 9 2.5 Q12.5 0.2 15.2 0.2 L20.8 4.8 Q15 5 11.5 7 Q8 8.5 5 8.1 Z" fill="#fff" stroke="#3a3a3a" stroke-width="1"/><path d="M5 8.1 L6.4 20.5" stroke="#3a3a3a" stroke-width="1"/><path d="M9 9.5 L12.5 17 L17 9.5" fill="#d8d8d8"/><path d="M12.6 7.4 L12.6 12.5" stroke="#222" stroke-width="2"/><path d="M9.8 11.2 L15.4 11.2 L12.6 15Z" fill="#222"/></svg>
<svg style="position:absolute;left:438px;top:64px;" width="12" height="8" viewBox="0 0 12 8"><path d="M1 1 L6 6 L11 1" fill="none" stroke="#444" stroke-width="2"/></svg>
<div style="position:absolute;left:457px;top:53px;width:2px;height:29px;background:#dcdcdc"></div>
<svg style="position:absolute;left:469px;top:57px;" width="22" height="22" viewBox="0 0 22 22"><path d="M1.5 19.5 L1.5 9.5 Q1.5 2 9 2 L19 2 Q20.5 2 20.5 3.5 L20.5 19.5 Q20.5 21 19 21 L3 21 Q1.5 21 1.5 19.5Z" fill="#fff" stroke="#3a3a3a" stroke-width="1.3"/><path d="M2 10 Q2 2.5 9 2.5 L13 2.5 Q5.5 3.5 5 11 L2 11Z" fill="#8c8c8c"/><path d="M5 11.5 Q5.5 4.5 12.5 4.5 L20.5 4.5 M5 11.5 L5 21" fill="none" stroke="#3a3a3a" stroke-width="1"/></svg>
<svg style="position:absolute;left:509px;top:57px;" width="22" height="22" viewBox="0 0 22 22"><path d="M1.5 19.5 L1.5 9 L8.5 2 L19 2 Q20.5 2 20.5 3.5 L20.5 19.5 Q20.5 21 19 21 L3 21 Q1.5 21 1.5 19.5Z" fill="#fff" stroke="#3a3a3a" stroke-width="1.3"/><path d="M2 9.2 L8.7 2.5 L12 2.5 L5 10.8 L2 10.8Z" fill="#8c8c8c"/><path d="M5 10.8 L11.7 4.5 L20.5 4.5 M5 10.8 L5 21" fill="none" stroke="#3a3a3a" stroke-width="1"/></svg>
<svg style="position:absolute;left:549px;top:57px;" width="22" height="22" viewBox="0 0 22 22"><path d="M1.5 19 L7.5 2 L19 2 Q20.5 2 20.5 3.5 L20.5 19.5 Q20.5 21 19 21 L3 21 Q1.5 21 1.5 19Z" fill="#8c8c8c" stroke="#3a3a3a" stroke-width="1.3" stroke-linejoin="round"/><path d="M8 2.6 L19 2.6 Q20 2.6 20 3.6 L20 4.8 L9 4.8Z" fill="#fff"/><path d="M9 4.8 L20.5 4.8 M9 4.8 L3.5 21" fill="none" stroke="#3a3a3a" stroke-width="0.9"/></svg>
<svg style="position:absolute;left:589px;top:57px;" width="22" height="22" viewBox="0 0 22 22"><path d="M1.5 15 L3.5 13.5 L13 13.5 L13 3.5 L16 1.5 L18.5 1.5 L20.5 3.5 L20.5 20 Q20.5 21 19.5 21 L4.5 21 L1.5 18.5Z" fill="#fff" stroke="#3a3a3a" stroke-width="1.3" stroke-linejoin="round"/><path d="M4.5 16 L15.5 5.5 L15.5 16Z" fill="#8c8c8c" stroke="#3a3a3a" stroke-width="0.9"/><path d="M1.5 15 L4.5 16 L16 16 M4.5 16 L4.5 21 M13 3.5 L15.5 5.5 L18.5 1.5 M15.5 5.5 L15.5 16" fill="none" stroke="#3a3a3a" stroke-width="1"/></svg>
<svg style="position:absolute;left:629px;top:57px;" width="22" height="22" viewBox="0 0 22 22"><path d="M1.5 3.5 Q1.5 1.5 3.5 1.5 L18.5 1.5 Q20.5 1.5 20.5 3.5 L20.5 19.5 Q20.5 21 19 21 L3 21 Q1.5 21 1.5 19.5Z" fill="#fff" stroke="#3a3a3a" stroke-width="1.3"/><path d="M1.5 4.2 L20.5 4.2 M4.5 4.2 L4.5 21" fill="none" stroke="#3a3a3a" stroke-width="0.9"/><path d="M7.5 4.2 L7.5 17.5 L17.5 17.5 L17.5 4.2Z" fill="#8c8c8c" stroke="#3a3a3a" stroke-width="1.1"/><path d="M9.5 4.5 L9.5 15.5 L17.5 15.5" fill="none" stroke="#bbb" stroke-width="1"/></svg>
<svg style="position:absolute;left:668px;top:57px;" width="22" height="22" viewBox="0 0 22 22"><path d="M1.5 3.5 Q1.5 1.5 3.5 1.5 L18.5 1.5 Q20.5 1.5 20.5 3.5 L20.5 19.5 Q20.5 21 19 21 L3 21 Q1.5 21 1.5 19.5Z" fill="#fff" stroke="#3a3a3a" stroke-width="1.3"/><path d="M1.5 4.2 L20.5 4.2 M4.5 4.2 L4.5 21" fill="none" stroke="#3a3a3a" stroke-width="0.9"/><circle cx="12.5" cy="12.5" r="6.3" fill="#8c8c8c" stroke="#3a3a3a" stroke-width="1.2"/><circle cx="11.8" cy="11.8" r="3.5" fill="#6e6e6e"/><path d="M8.5 11 Q9.5 8.5 12 8.3" fill="none" stroke="#ccc" stroke-width="1"/></svg>
<div style="position:absolute;left:700px;top:53px;width:2px;height:29px;background:#dcdcdc"></div>
<svg style="position:absolute;left:712px;top:57px;" width="22" height="22" viewBox="0 0 22 22"><rect x="1" y="1" width="10" height="10" fill="#ffffff" stroke="#3a3a3a" stroke-width="1.5"/><rect x="11" y="1" width="10" height="10" fill="#8c8c8c" stroke="#3a3a3a" stroke-width="1.5"/><rect x="1" y="11" width="10" height="10" fill="#8c8c8c" stroke="#3a3a3a" stroke-width="1.5"/><rect x="11" y="11" width="10" height="10" fill="#8c8c8c" stroke="#3a3a3a" stroke-width="1.5"/></svg>
<svg style="position:absolute;left:747px;top:64px;" width="12" height="8" viewBox="0 0 12 8"><path d="M1 1 L6 6 L11 1" fill="none" stroke="#444" stroke-width="2"/></svg>
<svg style="position:absolute;left:773px;top:57px;" width="22" height="22" viewBox="0 0 22 22"><path d="M1 4 L4 1 L7 3 L7 11 L10 14 L10 21 L3 21 L1 19Z" fill="#ffffff" stroke="#3a3a3a" stroke-width="1.4" stroke-linejoin="round"/><path d="M14 4 L17 1 L20 3 L20 21 L13 21 L13 14 L15 11Z" fill="#8c8c8c" stroke="#3a3a3a" stroke-width="1.4" stroke-linejoin="round"/></svg>
<div style="position:absolute;left:805px;top:53px;width:2px;height:29px;background:#dcdcdc"></div>
<svg style="position:absolute;left:817px;top:57px;" width="22" height="22" viewBox="0 0 22 22"><circle cx="8" cy="11" r="7" fill="#ffffff" stroke="#3a3a3a" stroke-width="1.5"/><circle cx="15" cy="11" r="7" fill="#8c8c8c" stroke="#3a3a3a" stroke-width="1.5"/><path d="M11.5 5 A7 7 0 0 1 11.5 17 A7 7 0 0 1 11.5 5Z" fill="#aaa" stroke="#3a3a3a" stroke-width="1"/></svg>
<svg style="position:absolute;left:857px;top:57px;" width="22" height="22" viewBox="0 0 22 22"><path d="M1 4 L4 1 L21 1 L21 18 L18 21 L1 21Z" fill="#ffffff" stroke="#3a3a3a" stroke-width="1.4" stroke-linejoin="round"/><path d="M1 4 L18 4 L21 1 M18 4 L18 21" fill="none" stroke="#3a3a3a" stroke-width="1.2"/><path d="M1 16 Q8 10 12 15 Q16 19 22 14" fill="none" stroke="#999" stroke-width="1.4"/></svg>
<svg style="position:absolute;left:897px;top:57px;" width="22" height="22" viewBox="0 0 22 22"><path d="M1 12 L3 10 L11 10 L11 19 L9 21 L1 21Z" fill="#fff" stroke="#3a3a3a" stroke-width="1.2" stroke-linejoin="round"/><path d="M1 12 L9 12 L11 10 M9 12 L9 21" fill="none" stroke="#3a3a3a" stroke-width="0.9"/><path d="M15.8 1.4 L21.2 7.7 L15.8 14.1 L10.5 7.7Z" fill="#8c8c8c" stroke="#3a3a3a" stroke-width="1.2"/><path d="M1.8 9.5 Q2.5 4 6.5 2" fill="none" stroke="#222" stroke-width="1.5"/><path d="M4.5 0.8 L8.2 1.2 L6.3 4.5Z" fill="#222"/><path d="M20.2 13.1 L15 19" stroke="#222" stroke-width="1.5"/><path d="M13.5 16.5 L13.5 21 L17.8 20.2Z" fill="#222"/></svg>
<svg style="position:absolute;left:931px;top:64px;" width="12" height="8" viewBox="0 0 12 8"><path d="M1 1 L6 6 L11 1" fill="none" stroke="#444" stroke-width="2"/></svg>
<svg style="position:absolute;left:958px;top:58px;" width="22" height="22" viewBox="0 0 22 22"><rect x="1.5" y="1.8" width="16" height="16" rx="1.5" fill="#a9a9a9" stroke="#9a9a9a" stroke-width="0.8"/><path d="M1.5 4 L16 4 L17.5 1.8 M4 4 L4 17.8" fill="none" stroke="#cfcfcf" stroke-width="1.2"/><circle cx="17" cy="15.2" r="5.4" fill="#222"/><path d="M14.8 13 L19.2 17.4 M19.2 13 L14.8 17.4" stroke="#fff" stroke-width="1.7"/></svg>
<div style="position:absolute;left:990px;top:53px;width:2px;height:29px;background:#dcdcdc"></div>
<svg style="position:absolute;left:1002px;top:57px;" width="22" height="22" viewBox="0 0 22 22"><path d="M1 18 Q0 4 13 0.5 Q18 0 21.5 4 L15 9.5 Q10 7.5 8 13 Z" fill="#999"/><path d="M9.5 14 Q13.5 9.5 19 9.5 L22 12.5 Q17 14 13.5 21 L10.5 18 Z" fill="#fff" stroke="#3a3a3a" stroke-width="1.2" stroke-linejoin="round"/><path d="M8 6.5 L14 7.5 L12 9.3 L15.5 12.8 L13.8 14.5 L10.3 11 L8.6 12.8 Z" fill="#222"/></svg>
<svg style="position:absolute;left:1037px;top:64px;" width="12" height="8" viewBox="0 0 12 8"><path d="M1 1 L6 6 L11 1" fill="none" stroke="#444" stroke-width="2"/></svg>
<div style="position:absolute;left:1055px;top:53px;width:2px;height:29px;background:#dcdcdc"></div>
<svg style="position:absolute;left:1069px;top:57px;" width="22" height="22" viewBox="0 0 22 22"><path d="M1 1 L21 4 L21 21 L1 18Z" fill="#ccc" stroke="#3a3a3a" stroke-width="1.5" stroke-linejoin="round"/><path d="M11 2.5 L11 11 L21 12" fill="none" stroke="#3a3a3a" stroke-width="1.4"/></svg>
<svg style="position:absolute;left:1102px;top:64px;" width="12" height="8" viewBox="0 0 12 8"><path d="M1 1 L6 6 L11 1" fill="none" stroke="#444" stroke-width="2"/></svg>
<div style="position:absolute;left:1121px;top:53px;width:2px;height:29px;background:#dcdcdc"></div>
<svg style="position:absolute;left:1135px;top:57px;" width="22" height="22" viewBox="0 0 22 22"><path d="M1.6 1.5 L13 0.6 L17.2 5.2 L17.2 8.8 L10 8.8 L10 14.8 L17.2 14.8 L17.2 20.2 L16 21.5 L7 21.5 L1.6 16 Z" fill="#fff" stroke="#3a3a3a" stroke-width="1.4" stroke-linejoin="round"/><path d="M7 5.5 L17.2 5.2 L17.2 8.8 L10 8.8 L10 14.8 L17.2 14.8 L17.2 20.2 L16 21.5 L7 21.5 Z" fill="#8a8a8a" stroke="#3a3a3a" stroke-width="1.1" stroke-linejoin="round"/><path d="M1.6 1.5 L7 5.5 M10 8.8 L7.5 11.5 L7.5 16.5 L10 14.8" fill="none" stroke="#3a3a3a" stroke-width="1"/><path d="M7.8 11.5 L10 9.5 L10 14.5 L7.8 16.2Z" fill="#e4e4e4"/></svg>
<svg style="position:absolute;left:1168px;top:64px;" width="12" height="8" viewBox="0 0 12 8"><path d="M1 1 L6 6 L11 1" fill="none" stroke="#444" stroke-width="2"/></svg>
<div style="position:absolute;left:1187px;top:53px;width:2px;height:29px;background:#dcdcdc"></div>
<svg style="position:absolute;left:1199px;top:57px;" width="22" height="22" viewBox="0 0 22 22"><path d="M1.8 2.2 L9.6 1.6 L10.8 2.8 L10.8 12.4 L13.2 12.4 L13.2 0.4 L19.8 7 L19.8 17.2 L16.8 19.6 L6.6 19.6 L1.2 15.4 Z" fill="#fff" stroke="#3a3a3a" stroke-width="1.4" stroke-linejoin="round"/><path d="M1.8 2.2 L4.8 4.2 L6.6 19.6 M4.8 4.2 L9.6 1.6" fill="none" stroke="#3a3a3a" stroke-width="1"/><path d="M6 12.4 L13.2 12.4 L19.5 17 L16.8 19.3 L6.6 19.3Z" fill="#e2e2e2"/><path d="M13.2 12.4 L16.8 19.3" stroke="#999" stroke-width="0.9"/><path d="M1.8 2.2 L9.6 1.6 L10.8 2.8 L10.8 12.4 L13.2 12.4 L13.2 0.4 L19.8 7 L19.8 17.2 L16.8 19.6 L6.6 19.6 L1.2 15.4 Z" fill="none" stroke="#3a3a3a" stroke-width="1.4" stroke-linejoin="round"/></svg>
<svg style="position:absolute;left:1234px;top:64px;" width="12" height="8" viewBox="0 0 12 8"><path d="M1 1 L6 6 L11 1" fill="none" stroke="#444" stroke-width="2"/></svg>
<div style="position:absolute;left:1253px;top:53px;width:2px;height:29px;background:#dcdcdc"></div>
<div style="position:absolute;left:1264px;top:57px;width:23px;height:22px;border:1.3px solid #777;border-radius:3px;box-sizing:border-box;background:#fff"></div>
<div class="t" style="left:1267.3px;top:62.42px;font-size:12.5px;line-height:12.5px;font-weight:400;color:#444;">ST</div>
<svg style="position:absolute;left:1299px;top:64px;" width="12" height="8" viewBox="0 0 12 8"><path d="M1 1 L6 6 L11 1" fill="none" stroke="#444" stroke-width="2"/></svg>
<div style="position:absolute;left:1330px;top:50px;width:170px;height:36px;background:#ececec;border-radius:4px"></div>
<div class="t" style="left:1341.0px;top:60.76px;font-size:16px;line-height:16px;font-weight:400;color:#444;letter-spacing:-0.05px;">Search tools...</div>
<div style="position:absolute;left:1447px;top:59px;width:22px;height:21px;background:#f8f8f8;border:1px solid #cfcfcf;border-radius:2px;box-sizing:border-box"></div>
<div class="t" style="left:1450.0px;top:63.00px;font-size:13px;line-height:13px;font-weight:400;color:#444;">alt</div>
<div style="position:absolute;left:1470px;top:59px;width:19px;height:21px;background:#f8f8f8;border:1px solid #cfcfcf;border-radius:2px;box-sizing:border-box"></div>
<div class="t" style="left:1474.5px;top:63.00px;font-size:13px;line-height:13px;font-weight:400;color:#444;">C</div>
<svg style="position:absolute;left:11px;top:57px;" width="25" height="23" viewBox="0 0 25 23"><circle cx="5" cy="5" r="3.9" fill="none" stroke="#333" stroke-width="1.9"/><path d="M5 9 L5 19" stroke="#333" stroke-width="1.9"/><path d="M5 14.9 Q10.5 15 11.8 11.5" fill="none" stroke="#333" stroke-width="1.7"/><circle cx="5" cy="19.3" r="2.2" fill="#333"/><circle cx="12.6" cy="11" r="2" fill="#333"/><path d="M12 2.8 L22.8 2.8 M16.5 8.4 L22.8 8.4 M16.5 14.6 L22.8 14.6 M12 20.3 L22.8 20.3" stroke="#333" stroke-width="1.9" stroke-linecap="round"/></svg>
<svg style="position:absolute;left:15px;top:99px;" width="20" height="22" viewBox="0 0 20 22"><g fill="#333"><rect x="2.5" y="0" width="2" height="2.4"/><rect x="2.5" y="3.5" width="2" height="2.4"/><circle cx="3.5" cy="10" r="3.5"/><rect x="2.5" y="14.5" width="2" height="2.4"/><rect x="2.5" y="18.5" width="2" height="2.4"/></g><path d="M13 9 L13 19 M8 14 L18 14" stroke="#1a52c0" stroke-width="2.4"/></svg>
<svg style="position:absolute;left:11px;top:140px;" width="24" height="21" viewBox="0 0 24 21"><ellipse cx="12" cy="8.5" rx="11.5" ry="8" fill="#333"/><path d="M5 13 L2 20 L11 15Z" fill="#333"/></svg>
<svg style="position:absolute;left:11px;top:179px;" width="23" height="22" viewBox="0 0 23 22"><circle cx="13" cy="12.5" r="8.3" fill="none" stroke="#333" stroke-width="2.1"/><path d="M10 1.5 L16 1.5 M13 1.5 L13 4 M19.5 4.5 L21.5 6.5" stroke="#333" stroke-width="2"/><path d="M13 12.5 L16.5 8.5" stroke="#333" stroke-width="2"/><path d="M5 9.5 L0.5 9.5 M4.5 12.5 L1.5 12.5 M5 15.5 L2.5 15.5" stroke="#f8f8f8" stroke-width="2.4"/><path d="M6.5 9.8 L1 9.8 M6 12.8 L2 12.8 M6.5 15.8 L3 15.8" stroke="#333" stroke-width="1.3"/></svg>
<svg style="position:absolute;left:12px;top:953px;" width="22" height="19" viewBox="0 0 22 19"><path d="M0.5 1 L21 1 L21 11.5 L17.5 11.5 L17.5 10 A6 6 0 0 0 5.5 10 L5.5 11 L0.5 11Z" fill="#222"/><circle cx="11.5" cy="10.8" r="4.4" fill="#fff" stroke="#222" stroke-width="2.3"/><path d="M14.6 14 L18.5 17.8" stroke="#222" stroke-width="2.6" stroke-linecap="round"/></svg>
<div style="position:absolute;left:46px;top:89px;width:242px;height:854px;background:#fff;border-left:1px solid #e0e0e0;border-top:1px solid #dedede;border-right:1px solid #dadada;box-sizing:border-box"></div>
<div class="t" style="left:52.0px;top:100.60px;font-size:15px;line-height:15px;font-weight:700;color:#333;">Features (36)</div>
<svg style="position:absolute;left:205px;top:100px;" width="23" height="18" viewBox="0 0 23 18"><path d="M1.2 8 L1.2 1.2 L6.5 1.2 L8.5 3.3 L21.4 3.3 L21.4 16.5 L9.8 16.5 M1.2 14.2 L1.2 16.5 L2.8 16.5" fill="none" stroke="#333" stroke-width="1.6" stroke-linejoin="round"/><path d="M6.5 7.2 L6.5 15.6 M2.3 11.4 L10.7 11.4" stroke="#1a4ca8" stroke-width="2.5"/></svg>
<svg style="position:absolute;left:241px;top:97px;" width="21" height="23" viewBox="0 0 21 23"><circle cx="10.5" cy="13" r="8.3" fill="none" stroke="#222" stroke-width="2.2"/><path d="M7 1.5 L14 1.5 M10.5 1.5 L10.5 4.5 M16.5 4 L18.5 6" stroke="#222" stroke-width="2.2"/><path d="M10.5 13 L14 16.5" stroke="#222" stroke-width="1.8"/></svg>
<svg style="position:absolute;left:59px;top:135px;" width="19" height="19" viewBox="0 0 19 19"><path d="M1 1.5 L18 1.5 L11 10 L11 17.5 L8 17.5 L8 10Z" fill="none" stroke="#333" stroke-width="1.6" stroke-linejoin="round"/></svg>
<div style="position:absolute;left:93px;top:127px;width:184px;height:34px;border:1px solid #d2d2d2;border-radius:3px;box-sizing:border-box;background:#fff"></div>
<div class="t" style="left:99.5px;top:136.60px;font-size:15px;line-height:15px;font-weight:400;color:#9a9a9a;font-style:italic;letter-spacing:-0.09px;">Filter by name or type</div>
<div style="position:absolute;left:0;top:161px;width:262px;height:480px;overflow:hidden"><div style="position:absolute;left:0;top:-161px;width:262px;height:900px"><svg style="position:absolute;left:54px;top:159.7px;" width="19" height="18" viewBox="0 0 19 18"><path d="M3 13.5 L13 3 Q14.2 1.8 15.4 3 L16 3.6 Q17.2 4.8 16 6 L6 16.5 L2.5 17.2Z M12 4.2 L14.8 7" fill="none" stroke="#9a9a9a" stroke-width="1.2" stroke-linejoin="round"/><path d="M0.5 17.3 L18 17.3" stroke="#9fb3dc" stroke-width="1.2"/></svg>
<div class="t" style="left:77.5px;top:162.00px;font-size:15px;line-height:15px;font-weight:400;color:#9c9c9c;letter-spacing:0.03px;">Sketch 6</div>
<svg style="position:absolute;left:54px;top:190.62px;" width="18" height="18" viewBox="0 0 18 18"><path d="M0.8 16.5 L0.8 2.8 Q0.8 0.8 2.8 0.8 L14 0.8 Q17.2 0.8 17.2 4 L17.2 16.5 Q17.2 17.2 16.5 17.2 L1.5 17.2 Q0.8 17.2 0.8 16.5Z" fill="#fff" stroke="#555" stroke-width="1.1"/><path d="M2.6 17 L2.6 3 L17 3 M4 17 L4 4.6 L17 4.6" fill="none" stroke="#666" stroke-width="0.8"/><rect x="7.5" y="8.3" width="9.7" height="8.9" fill="#9a9a9a" stroke="#555" stroke-width="1"/><path d="M7.5 8.3 L9 9.8 L17 9.8 M9 9.8 L9 17" fill="none" stroke="#6a6a6a" stroke-width="0.7"/></svg>
<div class="t" style="left:77.5px;top:192.42px;font-size:15px;line-height:15px;font-weight:400;color:#3c3c3c;letter-spacing:0.03px;">Extrude 6</div>
<svg style="position:absolute;left:54px;top:220.54px;" width="19" height="18" viewBox="0 0 19 18"><path d="M3 13.5 L13 3 Q14.2 1.8 15.4 3 L16 3.6 Q17.2 4.8 16 6 L6 16.5 L2.5 17.2Z M12 4.2 L14.8 7" fill="none" stroke="#9a9a9a" stroke-width="1.2" stroke-linejoin="round"/><path d="M0.5 17.3 L18 17.3" stroke="#9fb3dc" stroke-width="1.2"/></svg>
<div class="t" style="left:77.5px;top:222.84px;font-size:15px;line-height:15px;font-weight:400;color:#9c9c9c;letter-spacing:0.03px;">Sketch 8</div>
<svg style="position:absolute;left:54px;top:251.45999999999998px;" width="18" height="18" viewBox="0 0 18 18"><path d="M0.8 16.5 L0.8 2.8 Q0.8 0.8 2.8 0.8 L14 0.8 Q17.2 0.8 17.2 4 L17.2 16.5 Q17.2 17.2 16.5 17.2 L1.5 17.2 Q0.8 17.2 0.8 16.5Z" fill="#fff" stroke="#555" stroke-width="1.1"/><path d="M2.6 17 L2.6 3 L17 3 M4 17 L4 4.6 L17 4.6" fill="none" stroke="#666" stroke-width="0.8"/><rect x="7.5" y="8.3" width="9.7" height="8.9" fill="#9a9a9a" stroke="#555" stroke-width="1"/><path d="M7.5 8.3 L9 9.8 L17 9.8 M9 9.8 L9 17" fill="none" stroke="#6a6a6a" stroke-width="0.7"/></svg>
<div class="t" style="left:77.5px;top:253.26px;font-size:15px;line-height:15px;font-weight:400;color:#3c3c3c;letter-spacing:0.03px;">Extrude 8</div>
<svg style="position:absolute;left:54px;top:281.38px;" width="19" height="18" viewBox="0 0 19 18"><path d="M3 13.5 L13 3 Q14.2 1.8 15.4 3 L16 3.6 Q17.2 4.8 16 6 L6 16.5 L2.5 17.2Z M12 4.2 L14.8 7" fill="none" stroke="#9a9a9a" stroke-width="1.2" stroke-linejoin="round"/><path d="M0.5 17.3 L18 17.3" stroke="#9fb3dc" stroke-width="1.2"/></svg>
<div class="t" style="left:77.5px;top:283.68px;font-size:15px;line-height:15px;font-weight:400;color:#9c9c9c;letter-spacing:0.03px;">Sketch 9</div>
<svg style="position:absolute;left:54px;top:312.3px;" width="18" height="18" viewBox="0 0 18 18"><path d="M0.8 16.5 L0.8 2.8 Q0.8 0.8 2.8 0.8 L14 0.8 Q17.2 0.8 17.2 4 L17.2 16.5 Q17.2 17.2 16.5 17.2 L1.5 17.2 Q0.8 17.2 0.8 16.5Z" fill="#fff" stroke="#555" stroke-width="1.1"/><path d="M2.6 17 L2.6 3 L17 3 M4 17 L4 4.6 L17 4.6" fill="none" stroke="#666" stroke-width="0.8"/><rect x="7.5" y="8.3" width="9.7" height="8.9" fill="#9a9a9a" stroke="#555" stroke-width="1"/><path d="M7.5 8.3 L9 9.8 L17 9.8 M9 9.8 L9 17" fill="none" stroke="#6a6a6a" stroke-width="0.7"/></svg>
<div class="t" style="left:77.5px;top:314.10px;font-size:15px;line-height:15px;font-weight:400;color:#3c3c3c;letter-spacing:0.03px;">Extrude 9</div>
<svg style="position:absolute;left:54px;top:342.22px;" width="19" height="18" viewBox="0 0 19 18"><path d="M3 13.5 L13 3 Q14.2 1.8 15.4 3 L16 3.6 Q17.2 4.8 16 6 L6 16.5 L2.5 17.2Z M12 4.2 L14.8 7" fill="none" stroke="#9a9a9a" stroke-width="1.2" stroke-linejoin="round"/><path d="M0.5 17.3 L18 17.3" stroke="#9fb3dc" stroke-width="1.2"/></svg>
<div class="t" style="left:77.5px;top:344.52px;font-size:15px;line-height:15px;font-weight:400;color:#9c9c9c;letter-spacing:0.03px;">Sketch 10</div>
<svg style="position:absolute;left:54px;top:373.14px;" width="18" height="18" viewBox="0 0 18 18"><path d="M0.8 16.5 L0.8 2.8 Q0.8 0.8 2.8 0.8 L14 0.8 Q17.2 0.8 17.2 4 L17.2 16.5 Q17.2 17.2 16.5 17.2 L1.5 17.2 Q0.8 17.2 0.8 16.5Z" fill="#fff" stroke="#555" stroke-width="1.1"/><path d="M2.6 17 L2.6 3 L17 3 M4 17 L4 4.6 L17 4.6" fill="none" stroke="#666" stroke-width="0.8"/><rect x="7.5" y="8.3" width="9.7" height="8.9" fill="#9a9a9a" stroke="#555" stroke-width="1"/><path d="M7.5 8.3 L9 9.8 L17 9.8 M9 9.8 L9 17" fill="none" stroke="#6a6a6a" stroke-width="0.7"/></svg>
<div class="t" style="left:77.5px;top:374.94px;font-size:15px;line-height:15px;font-weight:400;color:#3c3c3c;letter-spacing:0.03px;">Extrude 10</div>
<svg style="position:absolute;left:54px;top:403.06px;" width="19" height="18" viewBox="0 0 19 18"><path d="M3 13.5 L13 3 Q14.2 1.8 15.4 3 L16 3.6 Q17.2 4.8 16 6 L6 16.5 L2.5 17.2Z M12 4.2 L14.8 7" fill="none" stroke="#9a9a9a" stroke-width="1.2" stroke-linejoin="round"/><path d="M0.5 17.3 L18 17.3" stroke="#9fb3dc" stroke-width="1.2"/></svg>
<div class="t" style="left:77.5px;top:405.36px;font-size:15px;line-height:15px;font-weight:400;color:#9c9c9c;letter-spacing:0.03px;">Sketch 11</div>
<svg style="position:absolute;left:54px;top:433.98px;" width="18" height="18" viewBox="0 0 18 18"><path d="M0.8 16.5 L0.8 2.8 Q0.8 0.8 2.8 0.8 L14 0.8 Q17.2 0.8 17.2 4 L17.2 16.5 Q17.2 17.2 16.5 17.2 L1.5 17.2 Q0.8 17.2 0.8 16.5Z" fill="#fff" stroke="#555" stroke-width="1.1"/><path d="M2.6 17 L2.6 3 L17 3 M4 17 L4 4.6 L17 4.6" fill="none" stroke="#666" stroke-width="0.8"/><rect x="7.5" y="8.3" width="9.7" height="8.9" fill="#9a9a9a" stroke="#555" stroke-width="1"/><path d="M7.5 8.3 L9 9.8 L17 9.8 M9 9.8 L9 17" fill="none" stroke="#6a6a6a" stroke-width="0.7"/></svg>
<div class="t" style="left:77.5px;top:435.78px;font-size:15px;line-height:15px;font-weight:400;color:#3c3c3c;letter-spacing:0.03px;">Extrude 11</div>
<svg style="position:absolute;left:54px;top:464.40000000000003px;" width="18" height="18" viewBox="0 0 18 18"><path d="M1 3 L3.5 1 L6 2.5 L6 9 L8.5 11.5 L8.5 17 L2.5 17 L1 15.5Z" fill="#fff" stroke="#555" stroke-width="1.2" stroke-linejoin="round"/><path d="M11.5 3 L14 1 L16.5 2.5 L16.5 17 L10.5 17 L10.5 11.5 L12.5 9Z" fill="#999" stroke="#555" stroke-width="1.2" stroke-linejoin="round"/></svg>
<div class="t" style="left:77.5px;top:466.20px;font-size:15px;line-height:15px;font-weight:400;color:#3c3c3c;letter-spacing:0.03px;">Mirror 3</div>
<svg style="position:absolute;left:54px;top:494.82px;" width="18" height="18" viewBox="0 0 18 18"><path d="M1 1 L17 3.5 L17 17 L1 14.5Z" fill="#e4e4e4" stroke="#b5b5b5" stroke-width="1.3" stroke-linejoin="round"/><path d="M9 2.3 L9 9 L17 10" fill="none" stroke="#b5b5b5" stroke-width="1.2"/></svg>
<div class="t" style="left:77.5px;top:496.62px;font-size:15px;line-height:15px;font-weight:400;color:#a3a3a3;letter-spacing:0.03px;">Plane 1</div>
<svg style="position:absolute;left:54px;top:524.74px;" width="19" height="18" viewBox="0 0 19 18"><path d="M3 13.5 L13 3 Q14.2 1.8 15.4 3 L16 3.6 Q17.2 4.8 16 6 L6 16.5 L2.5 17.2Z M12 4.2 L14.8 7" fill="none" stroke="#9a9a9a" stroke-width="1.2" stroke-linejoin="round"/><path d="M0.5 17.3 L18 17.3" stroke="#9fb3dc" stroke-width="1.2"/></svg>
<div class="t" style="left:77.5px;top:527.04px;font-size:15px;line-height:15px;font-weight:400;color:#9c9c9c;letter-spacing:0.03px;">Sketch 12</div>
<svg style="position:absolute;left:54px;top:555.6600000000001px;" width="18" height="18" viewBox="0 0 18 18"><path d="M0.8 16.5 L0.8 2.8 Q0.8 0.8 2.8 0.8 L14 0.8 Q17.2 0.8 17.2 4 L17.2 16.5 Q17.2 17.2 16.5 17.2 L1.5 17.2 Q0.8 17.2 0.8 16.5Z" fill="#fff" stroke="#555" stroke-width="1.1"/><path d="M2.6 17 L2.6 3 L17 3 M4 17 L4 4.6 L17 4.6" fill="none" stroke="#666" stroke-width="0.8"/><rect x="7.5" y="8.3" width="9.7" height="8.9" fill="#9a9a9a" stroke="#555" stroke-width="1"/><path d="M7.5 8.3 L9 9.8 L17 9.8 M9 9.8 L9 17" fill="none" stroke="#6a6a6a" stroke-width="0.7"/></svg>
<div class="t" style="left:77.5px;top:557.46px;font-size:15px;line-height:15px;font-weight:400;color:#3c3c3c;letter-spacing:0.03px;">Extrude 12</div>
<svg style="position:absolute;left:53px;top:585.5799999999999px;" width="19" height="19" viewBox="0 0 19 19"><path d="M1 17 L1 8.5 Q1 1 8 1 L16 1 Q18 1 18 3 L18 17 Q18 18 17 18 L2 18 Q1 18 1 17Z" fill="#fff" stroke="#555" stroke-width="1.2"/><path d="M1.7 9 Q1.7 1.7 8.5 1.7 L11.5 1.7 Q5 3 4.3 10.5 L1.7 10.5Z" fill="#999"/><path d="M4.3 10.5 L4.3 18 M4.3 10.5 Q5 3.5 11.5 3.5 L18 3.5" fill="none" stroke="#555" stroke-width="0.9"/></svg>
<div class="t" style="left:77.5px;top:587.88px;font-size:15px;line-height:15px;font-weight:400;color:#3c3c3c;letter-spacing:0.03px;">Fillet 2</div></div></div>
<div style="position:absolute;left:261px;top:161px;width:19px;height:480px;background:#f1f1f1"></div>
<svg style="position:absolute;left:265px;top:168px;" width="10" height="6" viewBox="0 0 10 6"><path d="M0 5.5 L4.5 0.5 L9 5.5Z" fill="#505050"/></svg>
<div style="position:absolute;left:262px;top:438px;width:18px;height:183px;background:#c1c1c1"></div>
<svg style="position:absolute;left:267px;top:628px;" width="9" height="5" viewBox="0 0 9 5"><path d="M0 0 L4.5 4.5 L9 0Z" fill="#a3a3a3"/></svg>
<div style="position:absolute;left:53px;top:622px;width:202px;height:8px;background:#c1c1c1"></div>
<div style="position:absolute;left:46px;top:641px;width:235px;height:1px;background:#dcdcdc"></div>
<svg style="position:absolute;left:52px;top:653px;" width="14" height="9" viewBox="0 0 14 9"><path d="M1 1.2 L6.7 7 L12.5 1.2" fill="none" stroke="#444" stroke-width="2.2"/></svg>
<div class="t" style="left:74.0px;top:649.30px;font-size:15px;line-height:15px;font-weight:400;color:#333;letter-spacing:0.1px;">Parts (3)</div>
<svg style="position:absolute;left:75px;top:678.0px;" width="19" height="19" viewBox="0 0 19 19"><path d="M1 10 L3.5 7.5 L8 7.5 L8 3 L10.5 1 L14 1 L17 3.5 L17 17 L16 18 L3 18 L1 16Z" fill="#fff" stroke="#666" stroke-width="1.2" stroke-linejoin="round"/><path d="M1 10 L11 10 L11 3 L14 1 M11 10 L11 13 L3.5 13 L1 10 M11 13 L17 13" fill="none" stroke="#666" stroke-width="1"/></svg>
<div class="t" style="left:100.0px;top:680.05px;font-size:15.3px;line-height:15.3px;font-weight:400;color:#3c3c3c;">shoulderpet_body</div>
<svg style="position:absolute;left:75px;top:708.42px;" width="19" height="19" viewBox="0 0 19 19"><path d="M1 10 L3.5 7.5 L8 7.5 L8 3 L10.5 1 L14 1 L17 3.5 L17 17 L16 18 L3 18 L1 16Z" fill="#fff" stroke="#666" stroke-width="1.2" stroke-linejoin="round"/><path d="M1 10 L11 10 L11 3 L14 1 M11 10 L11 13 L3.5 13 L1 10 M11 13 L17 13" fill="none" stroke="#666" stroke-width="1"/></svg>
<div class="t" style="left:100.0px;top:710.47px;font-size:15.3px;line-height:15.3px;font-weight:400;color:#3c3c3c;">shoulderpet_lid</div>
<svg style="position:absolute;left:75px;top:738.84px;" width="19" height="19" viewBox="0 0 19 19"><path d="M1 10 L3.5 7.5 L8 7.5 L8 3 L10.5 1 L14 1 L17 3.5 L17 17 L16 18 L3 18 L1 16Z" fill="#fff" stroke="#666" stroke-width="1.2" stroke-linejoin="round"/><path d="M1 10 L11 10 L11 3 L14 1 M11 10 L11 13 L3.5 13 L1 10 M11 13 L17 13" fill="none" stroke="#666" stroke-width="1"/></svg>
<div class="t" style="left:100.0px;top:740.89px;font-size:15.3px;line-height:15.3px;font-weight:400;color:#3c3c3c;">shoulderpet_tail</div>
<div style="position:absolute;left:46px;top:943px;width:1554px;height:35px;background:#d2d2d2"></div>
<div style="position:absolute;left:0px;top:978px;width:1600px;height:2px;background:#111"></div>
<svg style="position:absolute;left:57px;top:952px;" width="18" height="18" viewBox="0 0 18 18"><path d="M9 1 L9 17 M1 9 L17 9" stroke="#555" stroke-width="2.6"/></svg>
<div style="position:absolute;left:92px;top:943px;width:234px;height:35px;background:#fff"></div>
<div style="position:absolute;left:93px;top:974px;width:232px;height:3px;background:#1d4fb0;border-radius:1px"></div>
<svg style="position:absolute;left:106px;top:948px;" width="21" height="22" viewBox="0 0 21 22"><path d="M1.5 8 L4 5.5 L8 5.5 L8 20 L5 21 L1.5 20Z" fill="#fff" stroke="#333" stroke-width="1.3" stroke-linejoin="round"/><path d="M8 5.5 L10 2 L17 1.5 L19.5 4 L19.5 20 L17 21 L10 21 L8 20" fill="#fff" stroke="#333" stroke-width="1.3" stroke-linejoin="round"/><path d="M10 4.5 L17 4.5 L19.5 4 M13 4.5 L13 21 M4 9 L8 8" fill="none" stroke="#333" stroke-width="1"/></svg>
<div class="t" style="left:131.5px;top:951.76px;font-size:16px;line-height:16px;font-weight:400;color:#333;letter-spacing:-0.25px;">Part Studio 1</div>
</body></html>
